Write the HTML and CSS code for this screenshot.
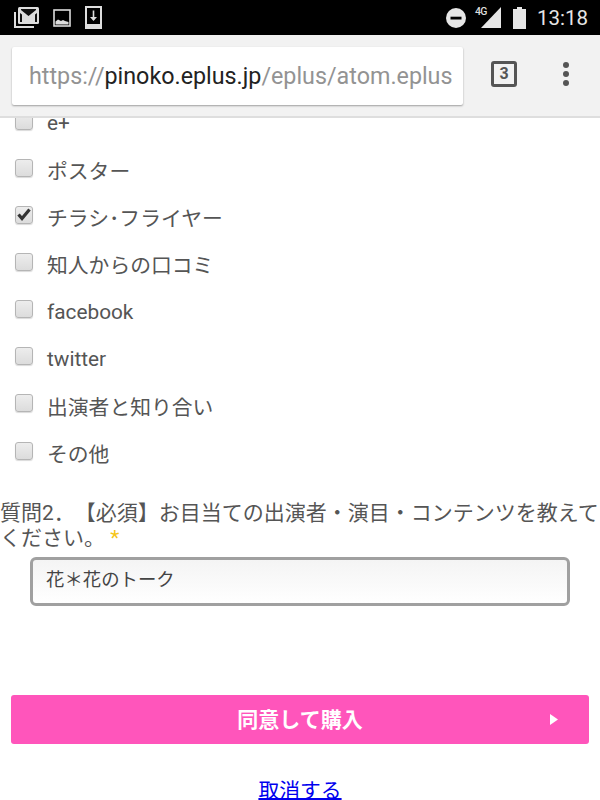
FILE: index.html
```html
<!DOCTYPE html>
<html lang="ja">
<head>
<meta charset="utf-8">
<title>eplus</title>
<link rel="stylesheet" href="styles.css">
</head>
<body>
<div class="status">
  <div class="status-left">
    <svg width="25" height="21" viewBox="0 0 25 21"><path d="M1 5v15h19" fill="none" stroke="#ddd" stroke-width="2"/><rect x="4" y="0" width="21" height="17" rx="1.500" fill="#ddd"/><path d="M7 2h15v1l-7.500 6L7 3zM6 6l2 1.500V15H6zM23 6l-2 1.500V15h2z" fill="#111"/></svg>
    <svg width="18" height="18" viewBox="0 0 18 18"><rect x="1" y="1" width="16" height="16" fill="none" stroke="#ddd" stroke-width="1.600"/><path d="M2.500 15.500v-3l2.500-2 3 1.500 2-1 2 1 3.500 1v2.500z" fill="#ddd"/></svg>
    <svg width="17" height="23" viewBox="0 0 17 23"><path d="M0 0h17v23H0z" fill="#ddd"/><path d="M2 2h13v16H2z" fill="#000"/><path d="M8.500 4.500v9" stroke="#ddd" stroke-width="1.600" fill="none"/><path d="M5 11h7l-3.500 4z" fill="#ddd"/></svg>
  </div>
  <div class="status-right">
    <svg class="dnd" width="20" height="20" viewBox="0 0 20 20"><circle cx="10" cy="10" r="10" fill="#e6e6e6"/><rect x="4.500" y="8.700" width="11" height="2.800" fill="#000"/></svg>
    <div class="signal">
      <span class="net">4G</span>
      <svg width="20" height="21" viewBox="0 0 20 21"><path d="M20 0v21H0z" fill="#e6e6e6"/></svg>
    </div>
    <svg width="13" height="22" viewBox="0 0 13 22"><path d="M4 0h5v2h4v20H0V2h4z" fill="#e6e6e6"/></svg>
    <span class="time">13:18</span>
  </div>
</div>
<div class="toolbar">
  <div class="omnibox"><span class="dim">https://</span><span class="host">pinoko.eplus.jp</span><span class="dim">/eplus/atom.eplus</span></div>
  <div class="tabs">3</div>
  <div class="menu"><i></i><i></i><i></i></div>
</div>
<main class="page">
  <ul class="checks">
    <li><span class="box"></span>e+</li>
    <li><span class="box"></span>ポスター</li>
    <li><span class="box"><svg width="14" height="13" viewBox="0 0 14 13"><path d="M1.500 6.500l3.500 4L12.500 1.500" fill="none" stroke="#333" stroke-width="3.200"/></svg></span>チラシ･フライヤー</li>
    <li><span class="box"></span>知人からの口コミ</li>
    <li><span class="box"></span>facebook</li>
    <li><span class="box"></span>twitter</li>
    <li><span class="box"></span>出演者と知り合い</li>
    <li><span class="box"></span>その他</li>
  </ul>
  <p class="question">質問2．【必須】お目当ての出演者・演目・コンテンツを教えてください。 <span class="req">*</span></p>
  <div class="field">花＊花のトーク</div>
  <div class="buy"><span>同意して購入</span><svg class="arrow" width="8" height="11" viewBox="0 0 8 11"><path d="M0 0l8 5.500-8 5.500z" fill="#fff"/></svg></div>
  <div class="cancel"><a href="#">取消する</a></div>
</main>
</body>
</html>
```
FILE: styles.css
```css
* { box-sizing: border-box; }
html, body { margin: 0; padding: 0; height: 800px; overflow: hidden; }
body { background: #fff; font-family: Roboto, "Noto Sans CJK JP", sans-serif; color: #555; }
.status { height: 35px; background: #000; display: flex; justify-content: space-between; align-items: center; padding: 0 12px 0 14px; position: relative; z-index: 2; }
.status-left { display: flex; align-items: center; gap: 14px; }
.status-right { display: flex; align-items: center; gap: 12px; }
.dnd { margin-right: 3px; }
.signal { display: flex; position: relative; }
.net { position: absolute; left: -6px; top: -1px; font-size: 10.500px; line-height: 11px; font-weight: 500; color: #ddd; letter-spacing: -.6px; }
.time { font-size: 20.500px; color: #e6e6e6; margin-left: -1px; }
.toolbar { height: 83px; background: #f2f2f2; border-bottom: 2px solid #dedede; display: flex; align-items: center; padding: 0 0 0 12px; position: relative; z-index: 1; }
.omnibox { width: 451px; height: 58px; margin-top: 1px; background: #fff; border-radius: 2px; box-shadow: 0 1px 2px rgba(0,0,0,.35); font-size: 23.300px; line-height: 58px; padding-left: 17px; white-space: nowrap; overflow: hidden; }
.dim { color: #939393; }
.host { color: #222; }
.tabs { width: 26px; height: 26px; margin-left: 28px; margin-top: -4px; border: 3px solid #555; border-radius: 3px; font-size: 16px; font-weight: 700; color: #555; text-align: center; line-height: 20px; }
.menu { display: flex; flex-direction: column; gap: 3px; margin-left: 46px; margin-top: -4px; }
.menu i { width: 6px; height: 6px; border-radius: 50%; background: #555; }
.page { margin-top: -18.500px; }
.checks { list-style: none; margin: 0; padding: 0; }
.checks li { height: 47.150px; display: flex; align-items: center; font-size: 20.800px; padding-left: 15px; color: #555; }
.box { width: 18px; height: 18px; margin-right: 14px; margin-top: -5px; border: 1px solid #b5b5b5; border-radius: 3px; background: linear-gradient(#ededed, #dcdcdc); box-shadow: 0 1px 1px rgba(0,0,0,.15); display: flex; align-items: center; justify-content: center; flex: none; }
.question { margin: 24px 0 0; font-size: 21px; line-height: 25px; color: #555; text-spacing-trim: space-all; }
.req { color: #f5c518; }
.field { margin: 6px 30px 0 30px; height: 49px; border: 3px solid #a0a0a0; border-radius: 6px; background: linear-gradient(#f4f4f4, #fff); font-size: 18.400px; line-height: 40px; padding-left: 13px; color: #444; }
.buy { margin: 89px 11px 0; height: 49px; padding-bottom: 3px; background: #ff55bb; border-radius: 3px; position: relative; display: flex; align-items: center; justify-content: center; color: #fff; font-size: 21px; font-weight: 700; }
.arrow { position: absolute; right: 31px; top: 19px; }
.cancel { text-align: center; margin-top: 30px; font-size: 20.800px; }
.cancel a { color: #0000ee; text-underline-offset: 0; }
```
